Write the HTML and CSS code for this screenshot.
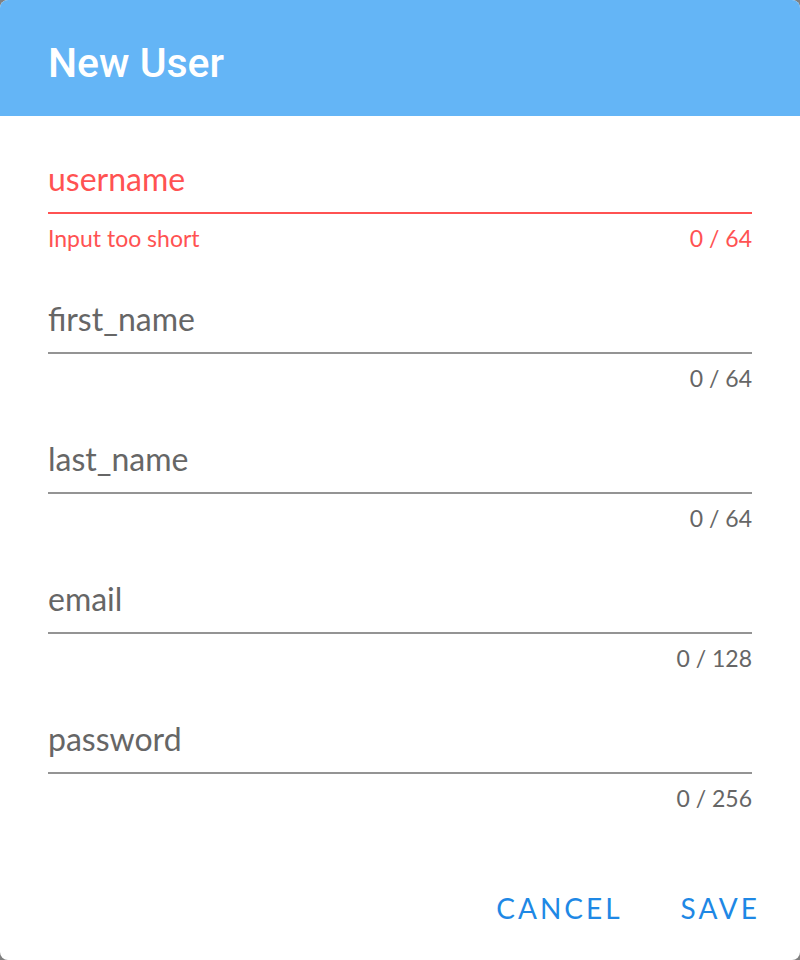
FILE: index.html
```html
<!DOCTYPE html>
<html>
<head>
<meta charset="utf-8">
<link rel="stylesheet" href="styles.css">
</head>
<body>
<div class="dialog">
  <div class="header">New User</div>
  <div class="form">
    <div class="field error">
      <div class="input">username</div>
      <div class="helper"><span class="msg">Input too short</span><span class="count">0 / 64</span></div>
    </div>
    <div class="field">
      <div class="input">first_name</div>
      <div class="helper"><span class="msg"></span><span class="count">0 / 64</span></div>
    </div>
    <div class="field">
      <div class="input">last_name</div>
      <div class="helper"><span class="msg"></span><span class="count">0 / 64</span></div>
    </div>
    <div class="field">
      <div class="input">email</div>
      <div class="helper"><span class="msg"></span><span class="count">0 / 128</span></div>
    </div>
    <div class="field">
      <div class="input">password</div>
      <div class="helper"><span class="msg"></span><span class="count">0 / 256</span></div>
    </div>
  </div>
  <div class="actions">
    <button class="btn">CANCEL</button>
    <button class="btn">SAVE</button>
  </div>
</div>
</body>
</html>
```
FILE: styles.css
```css
html, body {
  margin: 0;
  padding: 0;
  background: #808080;
}
.dialog {
  width: 800px;
  height: 960px;
  background: #fff;
  border-radius: 8px;
  overflow: hidden;
  display: flex;
  flex-direction: column;
  font-family: Lato, "Noto Sans", sans-serif;
}
.header {
  height: 116px;
  box-sizing: border-box;
  padding: 10px 48px 0;
  background: #64b5f6;
  color: #fff;
  font-family: Roboto, sans-serif;
  font-weight: 500;
  font-size: 41px;
  display: flex;
  align-items: center;
}
.form {
  padding: 28px 48px 0;
  display: flex;
  flex-direction: column;
  gap: 32px;
}
.field {
  display: flex;
  flex-direction: column;
}
.input {
  font-size: 32px;
  line-height: 40px;
  color: #666;
  padding-top: 15px;
  padding-bottom: 13px;
  border-bottom: 2px solid #949494;
}
.helper {
  display: flex;
  justify-content: space-between;
  margin-top: 10px;
  font-size: 23px;
  line-height: 28px;
  color: #666;
}
.error .input {
  color: #ff5252;
  border-bottom-color: #ff5252;
}
.error .helper {
  color: #ff5252;
}
.actions {
  margin-top: auto;
  display: flex;
  justify-content: flex-end;
  gap: 58px;
  padding: 0 40px 32px 0;
}
.btn {
  background: none;
  border: none;
  padding: 0 0;
  font-family: Lato, "Noto Sans", sans-serif;
  font-size: 28px;
  line-height: 40px;
  letter-spacing: 3px;
  color: #1e88e5;
}
```
